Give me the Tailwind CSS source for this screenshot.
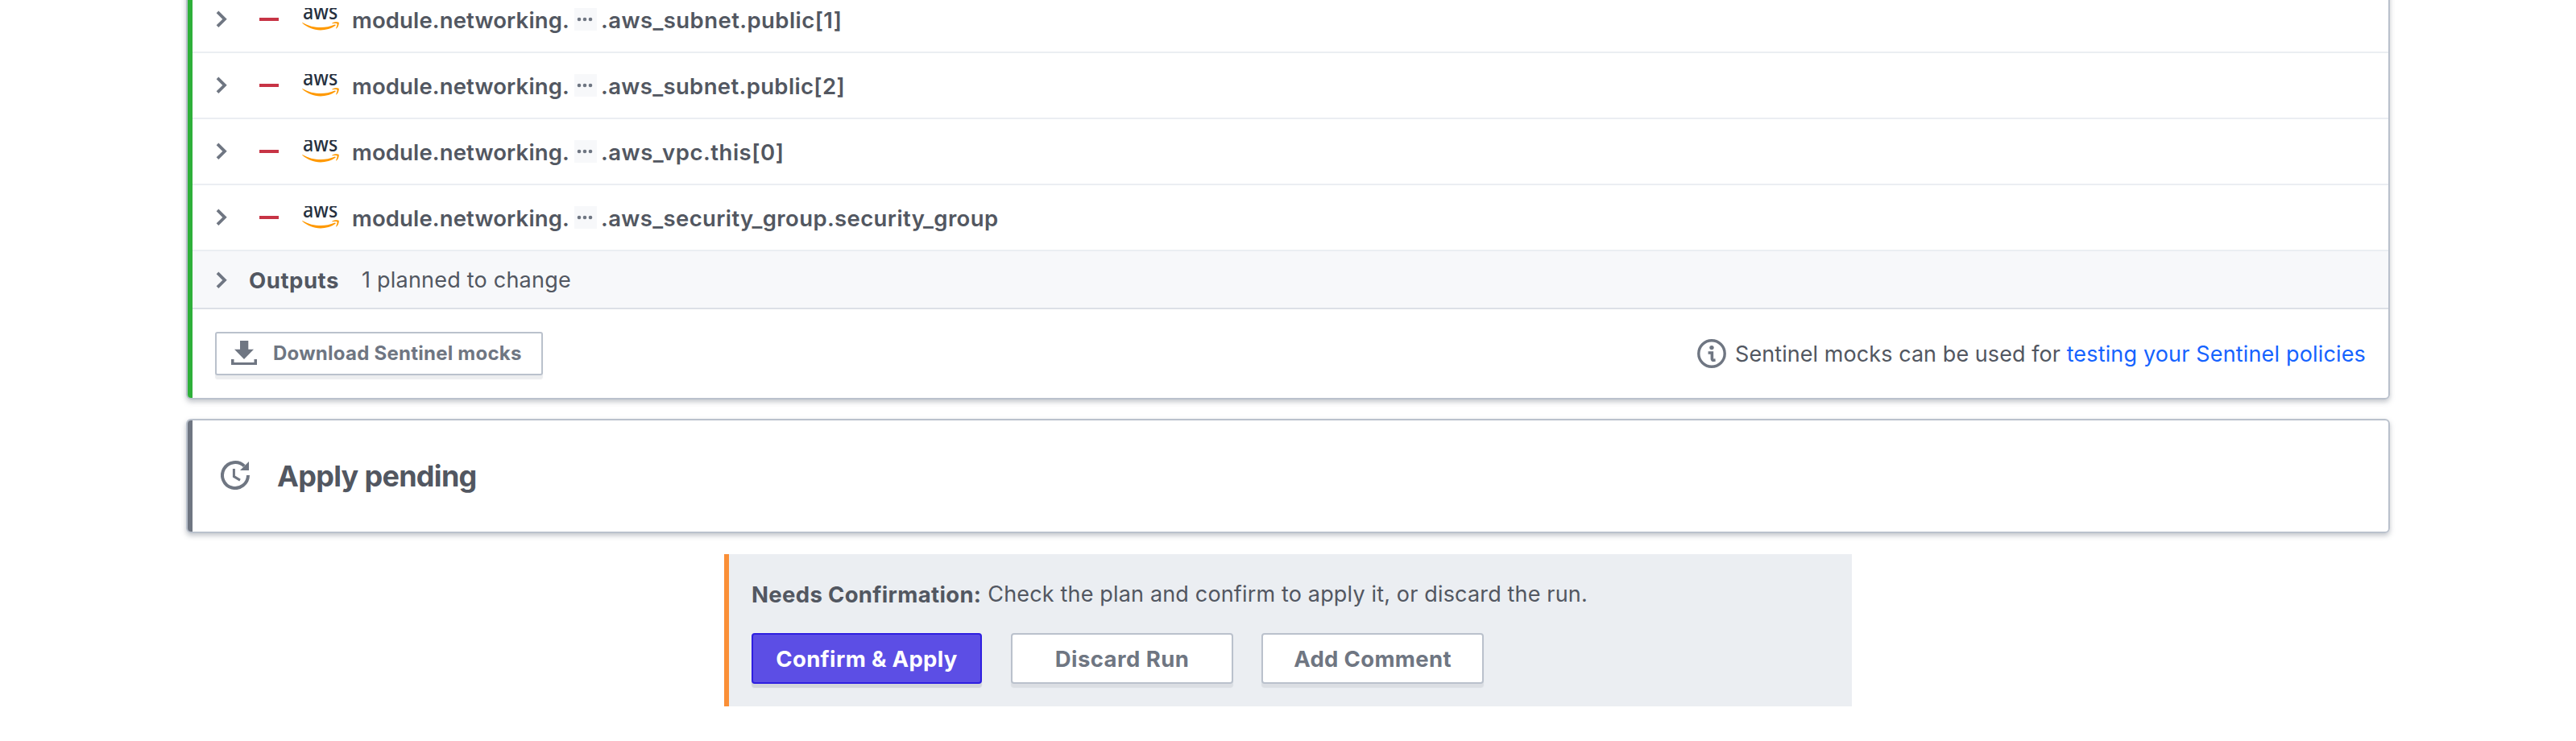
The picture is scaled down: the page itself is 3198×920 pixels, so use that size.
<!DOCTYPE html>
<html lang="en">
<head>
<meta charset="utf-8">
<title>Run details</title>
<script src="https://cdn.jsdelivr.net/npm/@tailwindcss/browser@4"></script>
</head>
<body class="flow-root h-[920px] overflow-hidden bg-white font-['Inter','Liberation_Sans',sans-serif] text-[27px] leading-10 text-[#525761] [font-optical-sizing:none]">

<!-- Shared icons -->
<svg class="hidden">
  <symbol id="chevron" viewBox="0 0 14 22"><path d="M2 1.9 11 10.8 2 19.7" fill="none" stroke="#6f7682" stroke-width="3.8"/></symbol>
  <symbol id="aws" viewBox="0 0 304 185">
    <text x="6" y="93" font-family="Noto Sans, sans-serif" font-weight="500" font-size="174" textLength="286" lengthAdjust="spacingAndGlyphs" fill="#252f3e">aws</text>
    <path fill="#ff9900" d="M273.5 143.7c-32.9 24.3-80.7 37.2-121.8 37.2-57.6 0-109.5-21.3-148.7-56.7-3.1-2.8-.3-6.6 3.4-4.4 42.4 24.6 94.7 39.5 148.8 39.5 36.5 0 76.6-7.6 113.5-23.2 5.5-2.5 10.2 3.6 4.8 7.6z"/>
    <path fill="#ff9900" d="M287.2 128.1c-4.2-5.4-27.8-2.6-38.5-1.3-3.2.4-3.7-2.4-.8-4.5 18.8-13.2 49.7-9.4 53.3-5 3.6 4.5-1 35.4-18.6 50.2-2.7 2.3-5.3 1.1-4.1-1.9 4-9.9 12.9-32.2 8.7-37.5z"/>
  </symbol>
  <symbol id="dots" viewBox="0 0 28 28"><g fill="#6f7682"><circle cx="6" cy="14" r="2.3"/><circle cx="13" cy="14" r="2.3"/><circle cx="20" cy="14" r="2.3"/></g></symbol>
</svg>

<main class="-mt-[18px]">
  <!-- Plan -->
  <section class="mx-auto flex w-[2736px] overflow-hidden rounded-[6px] border-2 border-[#bac1cc] shadow-[0_3px_6px_rgba(97,104,117,0.38)]">
    <div class="w-1.5 shrink-0 bg-[#2eb039]"></div>
    <div class="grow">
      <div class="flex h-[82px] items-center border-b-2 border-[#ebeef2] pl-[29px] text-[27.5px] font-semibold">
        <svg class="h-[22px] w-[14px]"><use href="#chevron"/></svg>
        <span class="ml-10 h-1 w-6 bg-[#c73445]"></span>
        <svg class="ml-[29px] h-7 w-[46px]"><use href="#aws"/></svg>
        <span class="ml-4 w-[276px] pt-0.5 tracking-[0.14px]">module.networking.</span>
        <svg class="h-7 w-7 bg-[#f7f8fa]"><use href="#dots"/></svg>
        <span class="ml-[5px] pt-0.5 tracking-[0.43px]">.aws_subnet.public[1]</span>
      </div>
      <div class="flex h-[82px] items-center border-b-2 border-[#ebeef2] pl-[29px] text-[27.5px] font-semibold">
        <svg class="h-[22px] w-[14px]"><use href="#chevron"/></svg>
        <span class="ml-10 h-1 w-6 bg-[#c73445]"></span>
        <svg class="ml-[29px] h-7 w-[46px]"><use href="#aws"/></svg>
        <span class="ml-4 w-[276px] pt-0.5 tracking-[0.14px]">module.networking.</span>
        <svg class="h-7 w-7 bg-[#f7f8fa]"><use href="#dots"/></svg>
        <span class="ml-[5px] pt-0.5 tracking-[0.36px]">.aws_subnet.public[2]</span>
      </div>
      <div class="flex h-[82px] items-center border-b-2 border-[#ebeef2] pl-[29px] text-[27.5px] font-semibold">
        <svg class="h-[22px] w-[14px]"><use href="#chevron"/></svg>
        <span class="ml-10 h-1 w-6 bg-[#c73445]"></span>
        <svg class="ml-[29px] h-7 w-[46px]"><use href="#aws"/></svg>
        <span class="ml-4 w-[276px] pt-0.5 tracking-[0.14px]">module.networking.</span>
        <svg class="h-7 w-7 bg-[#f7f8fa]"><use href="#dots"/></svg>
        <span class="ml-[5px] pt-0.5 tracking-[0.52px]">.aws_vpc.this[0]</span>
      </div>
      <div class="flex h-[82px] items-center border-b-2 border-[#ebeef2] pl-[29px] text-[27.5px] font-semibold">
        <svg class="h-[22px] w-[14px]"><use href="#chevron"/></svg>
        <span class="ml-10 h-1 w-6 bg-[#c73445]"></span>
        <svg class="ml-[29px] h-7 w-[46px]"><use href="#aws"/></svg>
        <span class="ml-4 w-[276px] pt-0.5 tracking-[0.14px]">module.networking.</span>
        <svg class="h-7 w-7 bg-[#f7f8fa]"><use href="#dots"/></svg>
        <span class="ml-[5px] pt-0.5 tracking-[0.38px]">.aws_security_group.security_group</span>
      </div>
      <div class="flex h-[72px] items-center border-b-2 border-[#dce0e6] bg-[#f7f8fa] pt-0.5 pl-[29px]">
        <svg class="h-[22px] w-[14px]"><use href="#chevron"/></svg>
        <span class="ml-[27px] w-[140px] text-[27.5px] font-bold tracking-[0.55px]">Outputs</span>
        <span class="tracking-[0.22px]">1 planned to change</span>
      </div>
      <div class="flex h-[110px] items-center justify-between px-7">
        <button class="flex h-[54px] w-[407px] items-center rounded-[3px] border-2 border-[#bac1cc] bg-white pl-[18px] text-2xl font-bold tracking-[0.245px] text-[#6f7682] shadow-[0_5px_1px_rgba(111,118,130,0.13)]">
          <svg class="mb-0.5 h-[30px] w-8" viewBox="0 0 32 30" fill="#6f7682"><path d="M11 0h10.3v10.7H28L16 23 4 10.7h7zM0 23h3.5v4h25v-4H32v7H0z"/></svg>
          <span class="ml-5">Download Sentinel mocks</span>
        </button>
        <p class="flex items-center">
          <svg class="h-9 w-9" viewBox="0 0 36 36"><circle cx="18" cy="18" r="16.2" fill="none" stroke="#6f7682" stroke-width="3.4"/><circle cx="18" cy="10.6" r="2.7" fill="#6f7682"/><path d="M13.6 17H18.4V24.2Q18.4 26.4 20.6 26.2L22.6 26" fill="none" stroke="#6f7682" stroke-width="3.6"/></svg>
          <span class="ml-[11px] pt-0.5 tracking-[0.06px]">Sentinel mocks can be used for <a class="tracking-[0.16px] text-[#1563ff]">testing your Sentinel policies</a></span>
        </p>
      </div>
    </div>
  </section>

  <!-- Apply -->
  <section class="mx-auto mt-6 flex h-[142px] w-[2736px] items-center overflow-hidden rounded-[6px] border-2 border-[#bac1cc] shadow-[0_3px_6px_rgba(97,104,117,0.38)]">
    <div class="w-1.5 self-stretch bg-[#6f7682]"></div>
    <svg class="mb-0.5 ml-[35px] h-9 w-9" viewBox="0 0 36 36"><path d="M34 18A16 16 0 1 1 29.3 6.7" fill="none" stroke="#6f7682" stroke-width="4"/><path d="M35 1v11H24z" fill="#6f7682"/><path d="M16.4 10v9.6l7.6 4.5" fill="none" stroke="#6f7682" stroke-width="3"/></svg>
    <h2 class="ml-[34px] text-4xl font-bold tracking-[-0.7px]">Apply pending</h2>
  </section>

  <!-- Confirmation -->
  <section class="mx-auto mt-[26px] h-[189px] w-[1400px] border-l-[6px] border-[#fa8f37] bg-[#ebeef2] pt-[30px] pl-7">
    <p class="flex tracking-[0.16px]"><strong class="mr-2 text-[27.5px] font-bold tracking-[0.33px]">Needs Confirmation:</strong>Check the plan and confirm to apply it, or discard the run.</p>
    <div class="mt-7 flex text-[27.5px] font-bold tracking-[0.33px] text-[#6f7682]">
      <button class="h-[63px] w-[286px] rounded-[4px] border-2 border-[#2e1fe0] bg-[#5c4ee5] text-white shadow-[0_5px_1px_rgba(82,87,97,0.16)]">Confirm &amp; Apply</button>
      <button class="ml-9 h-[63px] w-[276px] rounded-[4px] border-2 border-[#bac1cc] bg-white tracking-[0.43px] shadow-[0_5px_1px_rgba(82,87,97,0.1)]">Discard Run</button>
      <button class="ml-[35px] h-[63px] w-[276px] rounded-[4px] border-2 border-[#bac1cc] bg-white shadow-[0_5px_1px_rgba(82,87,97,0.1)]">Add Comment</button>
    </div>
  </section>
</main>
</body>
</html>
